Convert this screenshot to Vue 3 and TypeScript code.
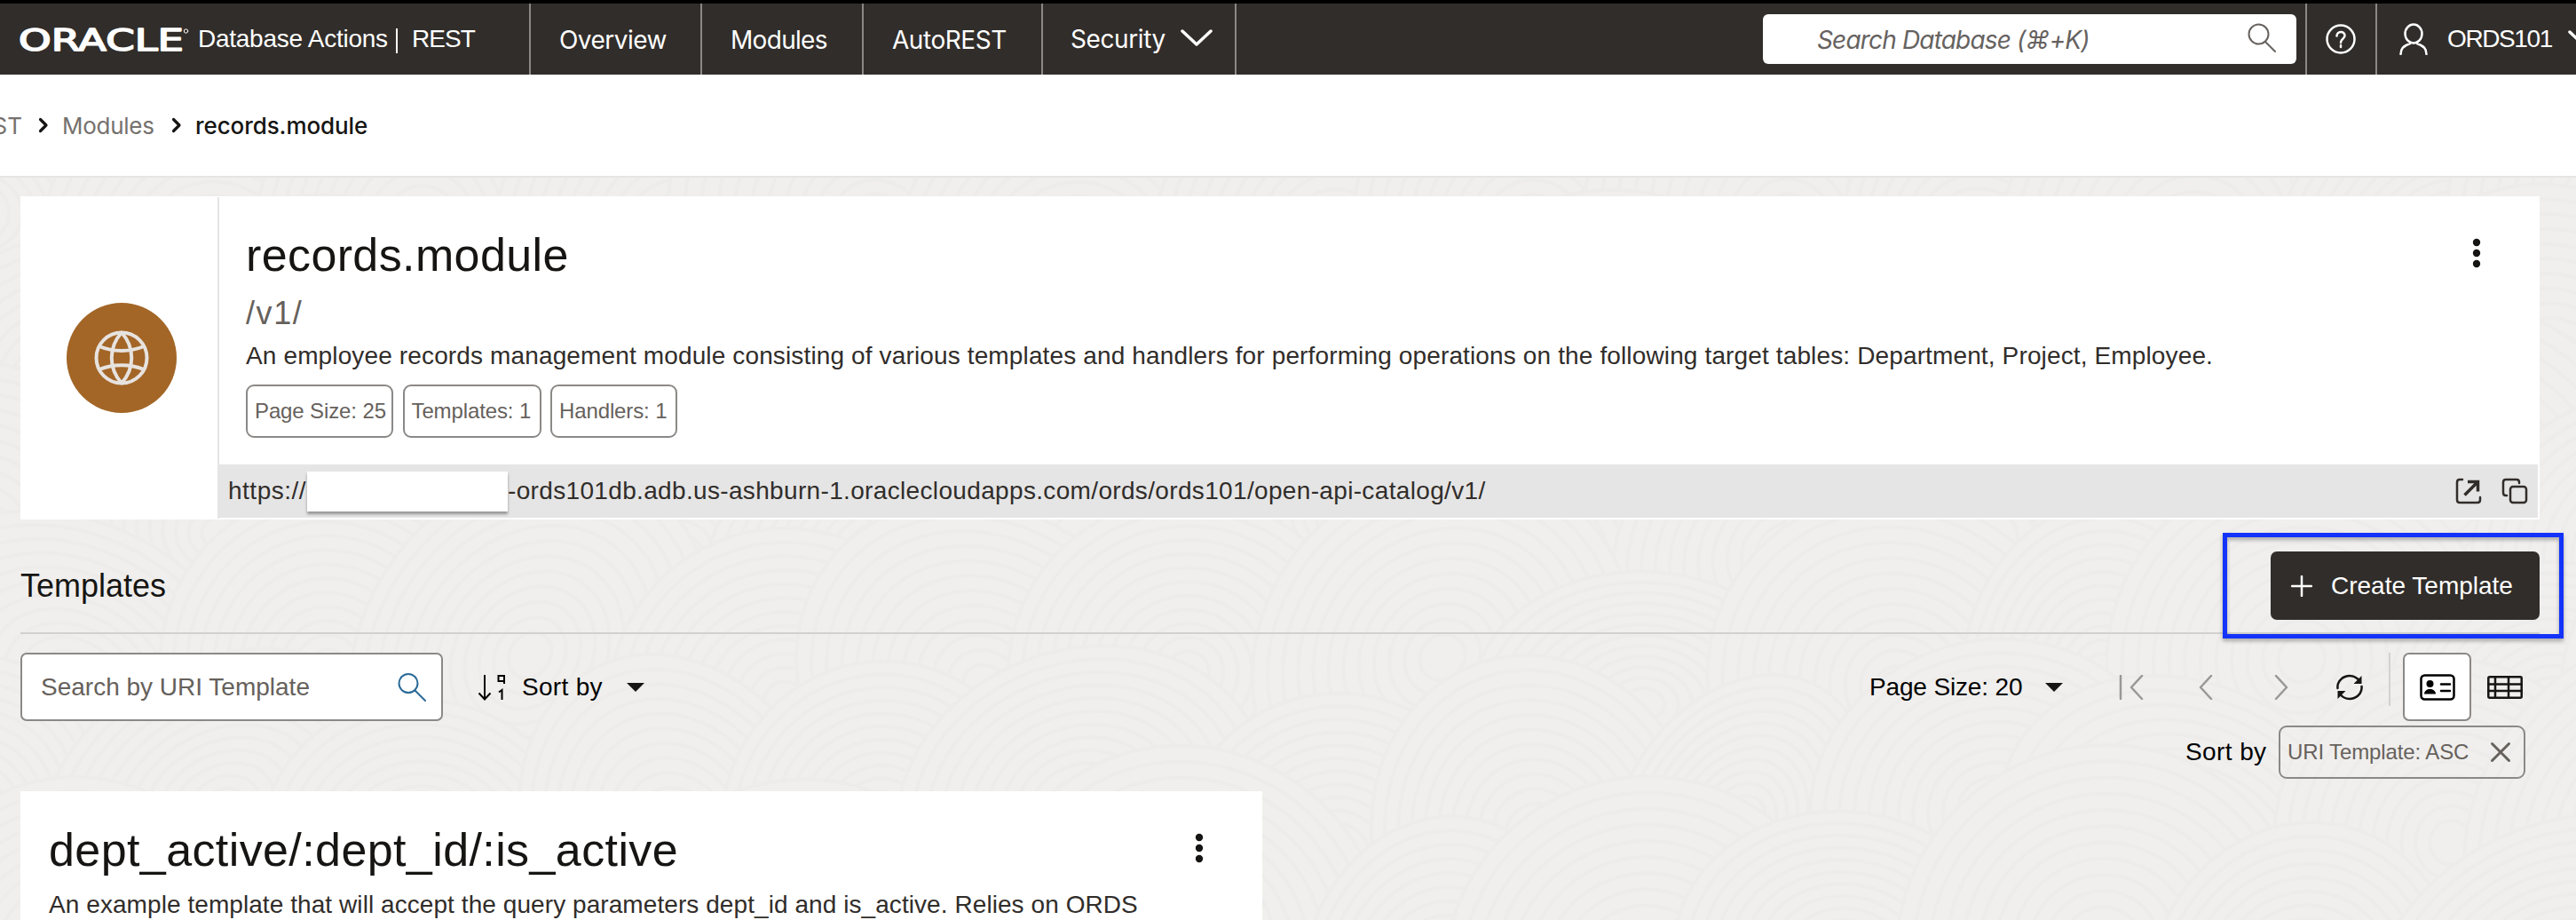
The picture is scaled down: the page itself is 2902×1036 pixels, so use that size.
<script setup lang="ts">
interface Swirl { x: number; y: number; r: number; k: number; a: number }
interface Chip { label: string; width: number }

// Overlapping ring groups that make up the faint page texture
const swirls: Swirl[] = []
for (let row = 0; row < 6; row++) {
  for (let col = 0; col < 13; col++) {
    const i = row * 13 + col
    swirls.push({
      x: col * 250 + (row % 2) * 120 - 40 + ((i * 37) % 60),
      y: 240 + row * 165 + ((i * 53) % 70),
      r: 180 + ((i * 29) % 60),
      k: 0.75 + ((i * 17) % 30) / 100,
      a: (i * 47) % 180,
    })
  }
}
const rings = [1, 0.92, 0.84, 0.76, 0.68, 0.6, 0.52, 0.44, 0.36, 0.28, 0.2, 0.12]

const chips: Chip[] = [
  { label: 'Page Size: 25', width: 166 },
  { label: 'Templates: 1', width: 156 },
  { label: 'Handlers: 1', width: 143 },
]
</script>

<template>
  <div class="page">
    <header class="topbar">
      <div class="brand">
        <svg class="logo" width="194" height="40" viewBox="0 0 194 40">
          <text x="0" y="32.500" textLength="186" lengthAdjust="spacingAndGlyphs">ORACLE</text>
          <circle cx="188.500" cy="11" r="2.200" />
        </svg>
        <span class="product">Database Actions</span>
        <i class="bar"></i>
        <span class="rest">REST</span>
      </div>
      <nav class="nav">
        <a class="n1">Overview</a>
        <a class="n2">Modules</a>
        <a class="n3">AutoREST</a>
        <a class="n4">Security
          <svg width="36" height="20" viewBox="0 0 36 20"><path d="M2 2 18 17 34 2" /></svg>
        </a>
      </nav>
      <div class="gsearch">
        <span>Search Database (⌘+K)</span>
        <svg width="34" height="34" viewBox="0 0 34 34"><circle cx="13.5" cy="12.5" r="11" /><path d="M21 21 32 32" /></svg>
      </div>
      <div class="help">
        <svg width="34" height="34" viewBox="0 0 34 34"><circle cx="17" cy="17" r="15.5" /><path d="M12.5 13.5c0-6 9-6 9-.5 0 4-4.500 3.500-4.500 8" /><path d="M17 24v2" /></svg>
      </div>
      <div class="user">
        <svg width="32" height="36" viewBox="0 0 32 36"><ellipse cx="16" cy="12" rx="9.500" ry="10.500" /><path d="M12 21.500v1.500C4 26 1.500 29 1.500 35M20 21.500v1.500c8 3 10.500 6 10.500 12" /></svg>
        <span>ORDS101</span>
        <svg class="uchev" width="36" height="20" viewBox="0 0 36 20"><path d="M2 2 18 17 34 2" /></svg>
      </div>
    </header>

    <div class="crumbs">
      <span class="c0">REST</span>
      <svg width="12" height="18" viewBox="0 0 12 18"><path d="M2.500 2.500 9 9 2.500 15.500" /></svg>
      <span class="c1">Modules</span>
      <svg width="12" height="18" viewBox="0 0 12 18"><path d="M2.500 2.500 9 9 2.500 15.500" /></svg>
      <span class="c2">records.module</span>
    </div>

    <main class="content">
      <svg class="texture" width="2902" height="836" viewBox="0 200 2902 836">
        <g v-for="(s, i) in swirls" :key="i" :transform="`translate(${s.x} ${s.y}) rotate(${s.a})`">
          <ellipse v-for="k in rings" :key="k" :rx="s.r * k" :ry="s.r * k * s.k" />
        </g>
      </svg>

      <section class="module">
        <div class="avatar">
          <div class="disc">
            <svg width="62" height="62" viewBox="0 0 62 62"><circle cx="31" cy="31" r="28.500" /><path d="M31 2.500C16 19 16 43 31 59.500 46 43 46 19 31 2.500ZM6 18c15 6.500 35 6.500 50 0M6 44c15-6.500 35-6.500 50 0" /></svg>
          </div>
        </div>
        <div class="info">
          <div class="body">
            <h1>records.module</h1>
            <div class="path">/v1/</div>
            <p>An employee records management module consisting of various templates and handlers for performing operations on the following target tables: Department, Project, Employee.</p>
            <div class="chips">
              <span v-for="c in chips" :key="c.label" class="chip" :style="{ width: c.width + 'px' }">{{ c.label }}</span>
            </div>
            <svg class="kebab" width="10" height="34" viewBox="0 0 10 34"><circle cx="5" cy="5" r="4.200" /><circle cx="5" cy="17" r="4.200" /><circle cx="5" cy="29" r="4.200" /></svg>
          </div>
          <div class="url">
            <span class="u1">https://</span>
            <i class="mask"></i>
            <span class="u2">-ords101db.adb.us-ashburn-1.oraclecloudapps.com/ords/ords101/open-api-catalog/v1/</span>
            <svg class="ext" width="30" height="30" viewBox="0 0 30 30"><path d="M8 2H5Q2 2 2 5V25Q2 28 5 28H25Q28 28 28 25V22" /><path class="arrow" d="M10.500 19.500 25 5M14 4.500H25.500V15.500" /></svg>
            <svg class="copy" width="30" height="30" viewBox="0 0 30 30"><rect x="10" y="10" width="18" height="18" rx="3" /><path d="M6 20H5Q2 20 2 17V5Q2 2 5 2H17Q20 2 20 5V6" /></svg>
          </div>
        </div>
      </section>

      <div class="head">
        <h2>Templates</h2>
        <button class="create">
          <svg width="24" height="24" viewBox="0 0 24 24"><path d="M12 1V23M1 12H23" /></svg>
          <span>Create Template</span>
        </button>
        <div class="highlight"></div>
      </div>

      <div class="tools">
        <div class="field">
          <span>Search by URI Template</span>
          <svg width="34" height="34" viewBox="0 0 34 34"><circle cx="13" cy="12.500" r="10.500" /><path d="M20.500 20.500 32 32" /></svg>
        </div>
        <svg class="sorticon" width="32" height="30" viewBox="0 0 32 30"><path d="M8 1V28M1.500 21.500 8 28.500 14.500 21.500M30 11V2H23.500V8H30M24 20.500 27.500 18V29" /></svg>
        <span class="sortby">Sort by</span>
        <i class="caret"></i>
        <div class="pager">
          <span class="psize">Page Size: 20</span>
          <i class="caret"></i>
          <svg class="first" width="28" height="28" viewBox="0 0 28 28"><path d="M2 1V27M26 1 14 14 26 27" /></svg>
          <svg class="prev" width="16" height="28" viewBox="0 0 16 28"><path d="M14 1 2 14 14 27" /></svg>
          <svg class="next" width="16" height="28" viewBox="0 0 16 28"><path d="M2 1 14 14 2 27" /></svg>
          <svg class="refresh" width="32" height="32" viewBox="0 0 32 32"><path d="M2.500 17C1 5 18-3 27.500 9M29.500 15C31 27 14 35 4.500 23" /><path class="fill" d="M29.500 3V12H20.500ZM2.500 29V20H11.500Z" /></svg>
          <i class="vsep"></i>
          <span class="cardbtn">
            <svg width="40" height="30" viewBox="0 0 40 30"><rect x="1.500" y="1.500" width="37" height="27" rx="4" /><path d="M24 11.500H34M24 19H34" /><circle class="fill" cx="11.500" cy="11" r="4" /><path class="fill" d="M5 22.500C5 15 18 15 18 22.500Z" /></svg>
          </span>
          <svg class="table" width="40" height="26" viewBox="0 0 40 26"><rect x="1.300" y="1.300" width="37.400" height="23.400" rx="1.500" /><path d="M9 1V25M24 1V25M1 9.500H39M1 17H39" /></svg>
        </div>
      </div>

      <div class="sortrow">
        <span class="sl">Sort by</span>
        <span class="chip tag">URI Template: ASC
          <svg width="24" height="24" viewBox="0 0 24 24"><path d="M2.500 2.500 21.500 21.500M21.500 2.500 2.500 21.500" /></svg>
        </span>
      </div>

      <article class="tcard">
        <h1>dept_active/:dept_id/:is_active</h1>
        <p>An example template that will accept the query parameters dept_id and is_active. Relies on ORDS</p>
        <svg class="kebab" width="10" height="34" viewBox="0 0 10 34"><circle cx="5" cy="5" r="4.200" /><circle cx="5" cy="17" r="4.200" /><circle cx="5" cy="29" r="4.200" /></svg>
      </article>
    </main>
  </div>
</template>

<style>
html, body { margin: 0; overflow: hidden; }
</style>
<style scoped>
* { box-sizing: border-box; }
.page { width: 2902px; height: 1036px; overflow: hidden; background: #fff; font-family: "Liberation Sans", Arial, sans-serif; font-size: 28px; color: #161513; }
span, h1, h2, p { white-space: nowrap; }
svg { flex: none; fill: none; stroke: currentColor; stroke-width: 2.5; stroke-linecap: round; stroke-linejoin: round; }
h1, h2, p { margin: 0; font-weight: 400; }

.topbar { display: flex; align-items: stretch; height: 84px; border-top: 4px solid #000; background: #312d2a; color: #fff; }
.brand { display: flex; align-items: center; width: 596px; padding-left: 21px; }
.logo text { font: 400 33.5px "DejaVu Sans", sans-serif; fill: #fff; stroke: #fff; stroke-width: 1.6; }
.logo circle { stroke-width: 1; }
.product { margin-left: 8px; width: 223px; letter-spacing: -.26px; }
.bar { width: 2px; height: 28px; background: #fff; margin: 4px 16px 0 0; }
.rest { letter-spacing: -.97px; }
.nav { display: flex; font-family: Inter, sans-serif; }
.nav a { display: flex; align-items: center; border-left: 2px solid #8b8885; padding: 2px 0 0 32px; }
.n1 { width: 193px; letter-spacing: -.54px; }
.n2 { width: 182px; letter-spacing: -.7px; }
.n3 { width: 202px; letter-spacing: -.46px; }
.nav .n4 { width: 220px; border-right: 2px solid #8b8885; padding-top: 0; padding-left: 31px; letter-spacing: -.41px; }
.n4 svg { margin: -2px 25px 0 auto; stroke-width: 3.5; }
.gsearch { display: flex; align-items: center; justify-content: space-between; width: 601px; height: 56px; margin: 12px 10px 0 auto; padding: 2px 22px 0 61px; background: #fff; border-radius: 6px; color: #66625f; font-family: Inter, "DejaVu Sans", sans-serif; font-style: italic; letter-spacing: -.83px; }
.gsearch svg { stroke-width: 2; margin-top: -4px; }
.help { display: flex; align-items: center; width: 79px; border-left: 2px solid #8b8885; padding-left: 21px; }
.user { display: flex; align-items: center; width: 226px; border-left: 2px solid #8b8885; padding-left: 25px; overflow: hidden; }
.user > span { flex: none; margin-left: 22px; width: 135px; letter-spacing: -1.4px; }
.uchev { margin-left: 1px; stroke-width: 3.5; }

.crumbs { display: flex; align-items: center; height: 116px; border-bottom: 2px solid #e5e5e5; font: 26px Inter, sans-serif; color: #75716e; }
.crumbs svg { color: #161513; stroke-width: 3.2; }
.c0 { width: 43px; display: flex; justify-content: flex-end; padding-right: 18px; }
.c1 { margin-left: 15px; width: 123px; letter-spacing: -.28px; }
.c2 { margin-left: 15px; color: #161513; font-weight: 500; letter-spacing: -.08px; }

.content { position: relative; height: 836px; padding: 21px 41px 0 23px; background: #f0efed; overflow: hidden; }
.texture { position: absolute; left: 0; top: 0; stroke: #edecea; fill: #f0efed; stroke-width: 4; }

.module { position: relative; display: flex; height: 364px; background: #fff; }
.avatar { display: flex; align-items: center; justify-content: center; width: 224px; padding-left: 6px; margin: 1px 0; border-right: 2px solid #e5e5e5; }
.disc { display: flex; align-items: center; justify-content: center; width: 124px; height: 124px; border-radius: 50%; background: #a36627; color: #e7e3df; }
.disc svg { stroke-width: 4; }
.info { flex: 1; display: flex; flex-direction: column; }
.body { position: relative; height: 302px; padding: 34px 0 0 30px; }
h1 { font-size: 52px; line-height: 64px; letter-spacing: .38px; }
.path { font-size: 36px; line-height: 44px; margin-top: 12px; color: #66615c; letter-spacing: 1.6px; }
p { line-height: 36px; color: #312d2a; letter-spacing: .135px; }
.body p { margin-top: 8px; }
.chips { display: flex; gap: 10.5px; margin-top: 14px; }
.chip { display: flex; align-items: center; height: 60px; border: 2px solid #8b8987; border-radius: 9px; padding-left: 8px; font-size: 24px; color: #66615c; letter-spacing: -.12px; }
.kebab { position: absolute; fill: #161513; stroke: none; right: 66px; top: 47px; }
.url { display: flex; align-items: center; height: 60px; margin-right: 2px; padding: 0 11px 0 10px; background: #e5e5e5; color: #312d2a; }
.u1 { width: 89px; letter-spacing: .5px; }
.mask { width: 226px; height: 45px; background: #fff; box-shadow: 0 3px 3px rgba(0, 0, 0, .35); }
.u2 { letter-spacing: .34px; }
.ext { margin-left: auto; }
.ext .arrow { stroke-width: 3.5; stroke-linecap: butt; stroke-linejoin: miter; }
.copy { margin-left: 22px; }

.head { position: relative; display: flex; justify-content: space-between; height: 129px; padding-top: 36px; border-bottom: 2px solid #d2d1cf; }
h2 { font-size: 36px; line-height: 77px; }
.create { display: flex; align-items: center; width: 303px; height: 77px; padding: 0 0 0 23px; border: 0; border-radius: 7px; background: #312d2a; color: #fff; font: 28px "Liberation Sans", Arial, sans-serif; }
.create span { margin-left: 21px; }
.highlight { position: absolute; left: 2481px; top: 15px; width: 384px; height: 119px; border: 5px solid #1433fa; filter: drop-shadow(0 3px 2px rgba(0, 0, 0, .3)); z-index: 2; }

.tools { position: relative; display: flex; align-items: center; height: 77px; margin-top: 21px; color: #000; }
.field { display: flex; align-items: center; justify-content: space-between; width: 476px; height: 77px; padding: 0 16px 0 21px; border: 2px solid #8b8987; border-radius: 7px; background: #fff; color: #66615c; }
.field svg { color: #2b6a98; stroke-width: 2; }
.sorticon { margin-left: 39px; stroke-width: 2; stroke-linecap: butt; stroke-linejoin: miter; }
.sortby { margin-left: 18px; width: 118px; letter-spacing: .3px; }
.caret { border: 10px solid transparent; border-top: 10px solid #161513; border-bottom: 0; }
.pager { display: flex; align-items: center; margin-left: auto; margin-right: 19px; }
.psize { width: 198px; letter-spacing: -.15px; }
.first, .prev, .next { color: #9a9896; }
.first { margin-left: 63px; }
.prev { margin-left: 62px; }
.next { margin-left: 69px; }
.refresh { margin-left: 53px; color: #161513; }
.fill { fill: currentColor; stroke: none; }
.vsep { width: 2px; height: 60px; margin: 0 14px 17px 28px; background: #d2d1cf; }
.cardbtn { display: flex; align-items: center; justify-content: center; width: 77px; height: 77px; border: 2px solid #8b8987; border-radius: 7px; background: #fff; }
.table { margin-left: 18px; color: #161513; }

.sortrow { position: relative; display: flex; justify-content: flex-end; align-items: center; height: 60px; margin: 5px 16px 0 0; color: #000; }
.sl { width: 105px; letter-spacing: .4px; }
.tag { width: 278px; }
.tag svg { margin-left: auto; margin-right: 14px; stroke-width: 3; }

.tcard { position: relative; width: 1399px; height: 200px; margin-top: 14px; padding: 34px 0 0 32px; background: #fff; }
.tcard h1 { letter-spacing: .4px; }
.tcard p { margin-top: 12px; letter-spacing: .07px; }
</style>
